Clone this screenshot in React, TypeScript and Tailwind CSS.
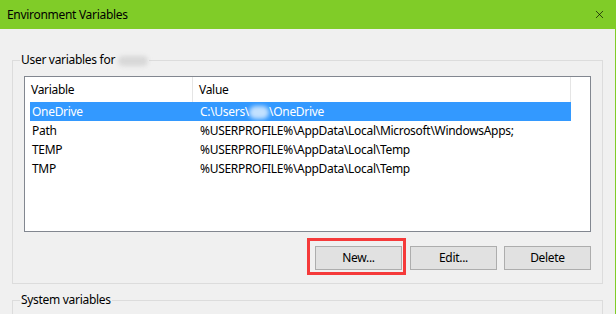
import { X } from 'lucide-react';

// ─── Data ─────────────────────────────────────────────────────────
interface EnvVar {
  name: string;
  value: React.ReactNode;
}

const Blur = ({ className }: { className: string }) => (
  <span className={`inline-block align-middle rounded-full blur-[2px] ${className}`} />
);

const USER_VARS: EnvVar[] = [
  {
    name: 'OneDrive',
    value: (
      <>
        C:\Users\<Blur className="w-[20px] h-[13px] bg-white/70" />\OneDrive
      </>
    ),
  },
  { name: 'Path', value: '%USERPROFILE%\\AppData\\Local\\Microsoft\\WindowsApps;' },
  { name: 'TEMP', value: '%USERPROFILE%\\AppData\\Local\\Temp' },
  { name: 'TMP', value: '%USERPROFILE%\\AppData\\Local\\Temp' },
];

// ─── Group box ────────────────────────────────────────────────────
function GroupBox({ label, children, className = '' }: { label: React.ReactNode; children?: React.ReactNode; className?: string }) {
  return (
    <div className={`relative border border-[#dcdcdc] ${className}`}>
      <span className="absolute left-[7px] -top-[9px] px-[1px] bg-[#f0f0f0] leading-[16px] text-black">
        {label}
      </span>
      {children}
    </div>
  );
}

function WinButton({ children, className = '' }: { children: React.ReactNode; className?: string }) {
  return (
    <button className={`w-[87px] h-[24px] bg-[#e1e1e1] border border-[#adadad] text-black leading-none ${className}`}>
      {children}
    </button>
  );
}

export default function App() {
  return (
    <div
      className="relative w-[616px] h-[314px] overflow-hidden bg-[#f0f0f0] border-r border-[#80cc28] text-[12px] tracking-[-0.3px] text-black"
      style={{ fontFamily: '"Noto Sans", "Open Sans", sans-serif' }}
    >
      {/* title bar */}
      <div className="h-[29px] bg-[#80cc28] flex items-center justify-between pl-[7px] pr-[9px]">
        <span className="leading-none">Environment Variables</span>
        <X size={13} strokeWidth={1.2} className="text-black" />
      </div>

      <div className="pl-[12px] pr-[12px] pt-[31px]">
        <GroupBox
          label={
            <>
              User variables for <Blur className="w-[30px] h-[10px] bg-[#c8c8c8]/60" />
            </>
          }
          className="pt-[15px] pl-[11px] pr-[11px] pb-[13px]"
        >
          {/* list view */}
          <div className="h-[156px] bg-white border border-[#828790]">
            <div className="flex h-[25px] items-center">
              <div className="w-[168px] h-full pl-[6px] flex items-center border-r border-[#e5e5e5]">Variable</div>
              <div className="w-[378px] h-full pl-[6px] flex items-center border-r border-[#e5e5e5]">Value</div>
            </div>
            {USER_VARS.map((v, i) => (
              <div
                key={v.name}
                className={`flex h-[19px] items-center ml-[5px] w-[541px] ${i === 0 ? 'bg-[#3399ff] text-white' : ''}`}
              >
                <div className="w-[163px] pl-[2px] whitespace-nowrap">{v.name}</div>
                <div className="pl-[7px] whitespace-nowrap">{v.value}</div>
              </div>
            ))}
          </div>

          <div className="flex justify-end gap-[7px] mt-[14px]">
            <WinButton className="mr-[1px]">New...</WinButton>
            <WinButton>Edit...</WinButton>
            <WinButton>Delete</WinButton>
          </div>
        </GroupBox>

        <GroupBox label="System variables" className="mt-[16px] h-[40px]" />
      </div>

      {/* red highlight annotation */}
      <div className="absolute left-[307px] top-[238px] w-[99px] h-[37px] border-[3px] border-[#f53a3a]" />
    </div>
  );
}
